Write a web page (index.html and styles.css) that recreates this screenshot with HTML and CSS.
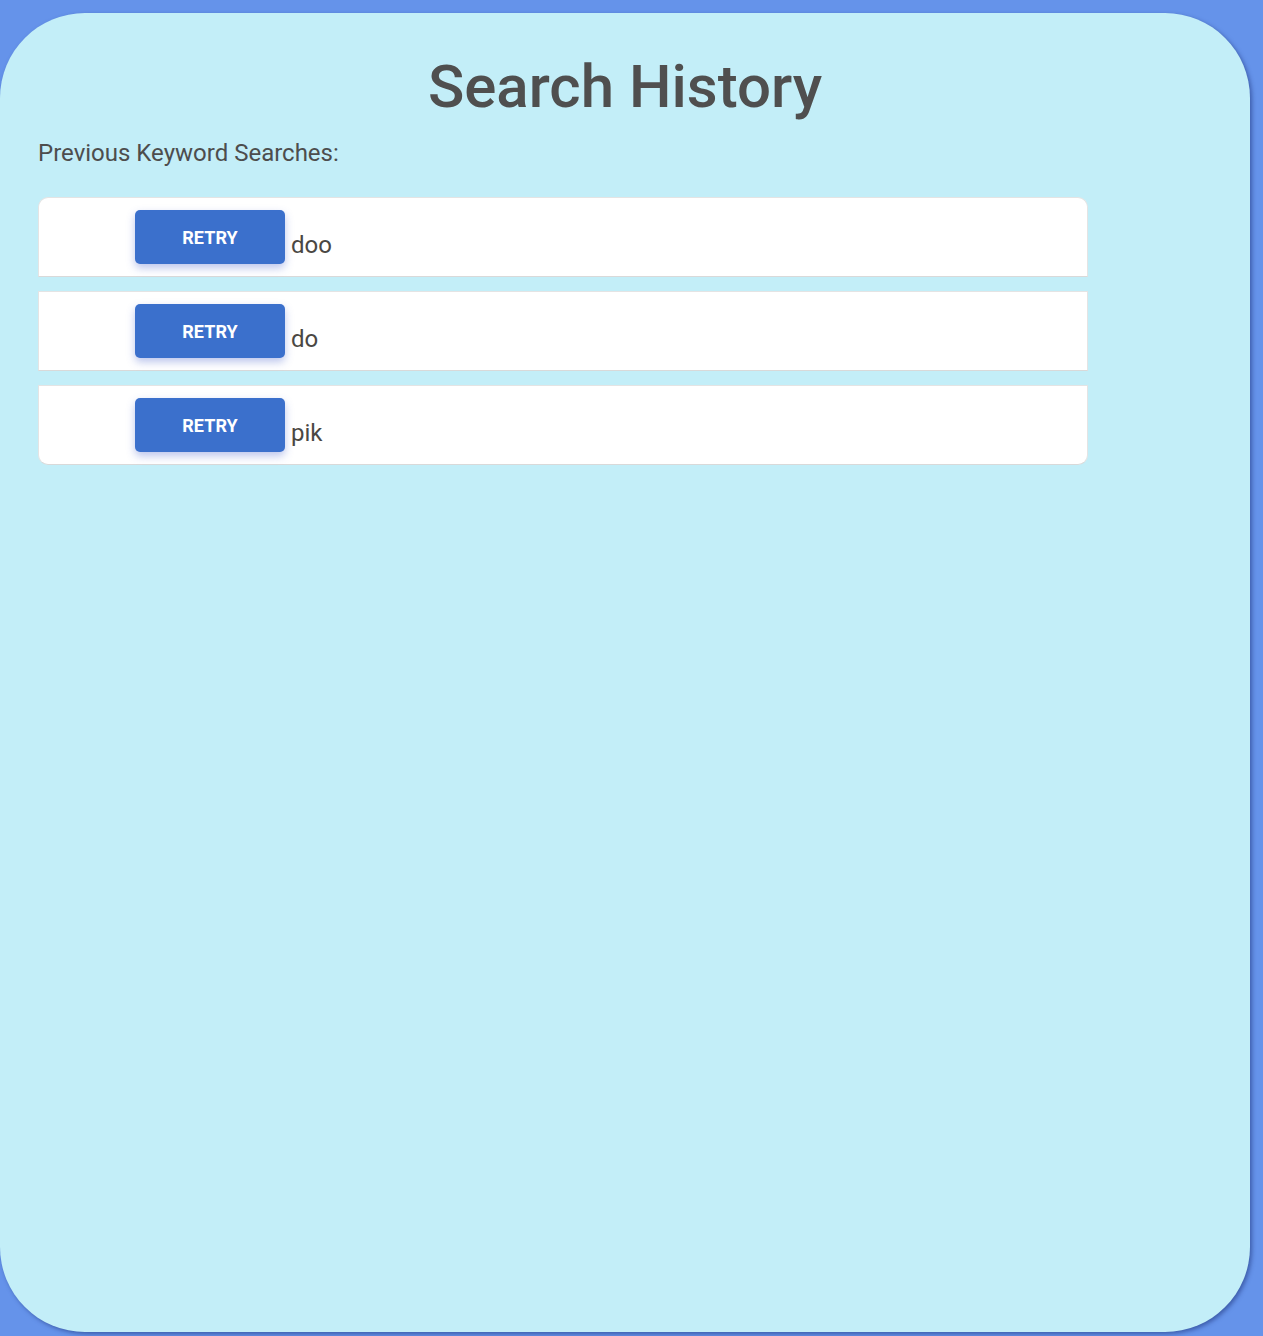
FILE: index.html
```html
<!DOCTYPE html>
<html>
<head>
<meta charset="utf-8">
<link rel="stylesheet" href="styles.css">
</head>
<body>
<div class="panel">
  <h1 class="title">Search History</h1>
  <p class="subtitle">Previous Keyword Searches:</p>
  <ul class="history">
    <li class="item"><button class="retry">RETRY</button><span class="keyword">doo</span></li>
    <li class="item"><button class="retry">RETRY</button><span class="keyword">do</span></li>
    <li class="item"><button class="retry">RETRY</button><span class="keyword">pik</span></li>
  </ul>
</div>
</body>
</html>
```
FILE: styles.css
```css
html, body {
  margin: 0;
  padding: 0;
  background: #6593ea;
  font-family: Roboto, "Liberation Sans", sans-serif;
}
body {
  padding-top: 13px;
  height: 1336px;
  box-sizing: border-box;
  overflow: hidden;
}
.panel {
  width: 1250px;
  height: 1319px;
  background: #c3eef8;
  border-radius: 85px;
  box-shadow: 2px 2px 4px rgba(30, 50, 120, 0.55);
  box-sizing: border-box;
  padding: 39px 38px 0 38px;
}
.title {
  margin: 0;
  text-align: center;
  font-size: 60px;
  font-weight: 500;
  color: #4f4f4f;
  line-height: 70px;
}
.subtitle {
  margin: 17px 0 0 0;
  font-size: 24px;
  line-height: 28px;
  color: #4d4d4d;
}
.history {
  list-style: none;
  margin: 30px 0 0 0;
  padding: 0;
  width: 1050px;
  display: flex;
  flex-direction: column;
  gap: 14px;
}
.item {
  background: #ffffff;
  height: 80px;
  box-sizing: border-box;
  border: 1px solid #e4e4e4;
  border-bottom-color: #d9d9d9;
  display: flex;
  align-items: flex-start;
  padding-left: 96px;
}
.item:first-child {
  border-radius: 10px 10px 0 0;
}
.item:last-child {
  border-radius: 0 0 10px 10px;
}
.retry {
  margin-top: 12px;
  width: 150px;
  height: 54px;
  border: none;
  border-radius: 5px;
  background: #3b70cc;
  color: #ffffff;
  font-family: Roboto, "Liberation Sans", sans-serif;
  font-weight: 700;
  font-size: 18px;
  letter-spacing: 0.1px;
  box-shadow: 0 4px 8px rgba(59, 90, 200, 0.35);
  padding: 0;
}
.keyword {
  margin-top: 33px;
  margin-left: 6px;
  font-size: 24px;
  line-height: 28px;
  color: #4a4743;
}
```
